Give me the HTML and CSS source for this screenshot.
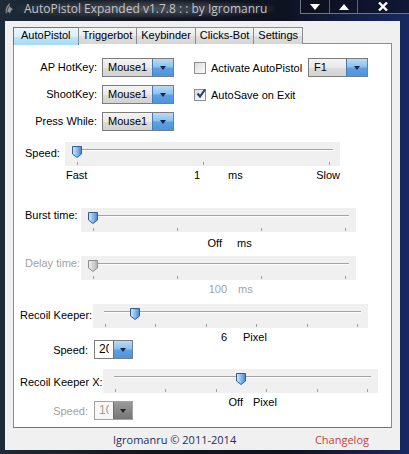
FILE: index.html
```html
<!DOCTYPE html>
<html lang="en">
<head>
  <meta charset="UTF-8">
  <title>AutoPistol Expanded v1.7.8</title>
  <link rel="stylesheet" href="styles.css">
</head>
<body>

  <!-- shared gradients for the slider thumbs -->
  <svg class="defs" width="0" height="0">
    <defs>
      <linearGradient id="thumbBlue" x1="0" y1="0" x2="1" y2="0">
        <stop offset="0" stop-color="#d6e9fb"/>
        <stop offset="0.5" stop-color="#8fbbea"/>
        <stop offset="1" stop-color="#4a84c9"/>
      </linearGradient>
      <linearGradient id="thumbGrey" x1="0" y1="0" x2="1" y2="0">
        <stop offset="0" stop-color="#f2f2f2"/>
        <stop offset="1" stop-color="#b4b4b4"/>
      </linearGradient>
    </defs>
  </svg>

  <div class="window">
    <div class="titlebar">
      <svg class="app-icon" width="11" height="13" viewBox="0 0 11 13">
        <path d="M2 12 C1 8 2 4 6 1 C5 4 6 6 9 7 C7 8 6 10 6 12 C5 10 4 9 2 12 Z" fill="#8d9096"/>
        <path d="M3 11 C3 8 4 5 6 3" stroke="#3a3d44" stroke-width="1" fill="none"/>
      </svg>
      <span class="title">AutoPistol Expanded v1.7.8 : : by Igromanru</span>
      <div class="caption-buttons">
        <span class="cap cap-min">
          <svg width="10" height="6" viewBox="0 0 10 6"><path d="M0 0 H10 L5 6 Z" fill="#fff"/></svg>
        </span>
        <span class="cap cap-max">
          <svg width="10" height="6" viewBox="0 0 10 6"><path d="M0 6 H10 L5 0 Z" fill="#fff"/></svg>
        </span>
        <span class="cap cap-close">
          <svg width="10" height="9" viewBox="0 0 10 9"><path d="M1 0.5 L9 8.5 M9 0.5 L1 8.5" stroke="#fff" stroke-width="2.4"/></svg>
        </span>
      </div>
    </div>

    <div class="client">
      <div class="tabs">
        <div class="tab active">AutoPistol</div>
        <div class="tab">Triggerbot</div>
        <div class="tab">Keybinder</div>
        <div class="tab">Clicks-Bot</div>
        <div class="tab">Settings</div>
      </div>

      <div class="panel">
        <div class="hotkeys">
          <span class="key-label">AP HotKey:</span>
          <div class="combo"><span class="combo-text">Mouse1</span><span class="combo-btn"><i class="arrow"></i></span></div>
          <div class="option">
            <span class="check"></span>
            <span>Activate AutoPistol</span>
            <div class="combo combo-f1"><span class="combo-text">F1</span><span class="combo-btn"><i class="arrow"></i></span></div>
          </div>

          <span class="key-label">ShootKey:</span>
          <div class="combo"><span class="combo-text">Mouse1</span><span class="combo-btn"><i class="arrow"></i></span></div>
          <div class="option">
            <span class="check checked">
              <svg width="12" height="12" viewBox="0 0 12 12"><path d="M2.5 5.5 L5 8.5 L10 1.5" stroke="#233e6d" stroke-width="2" fill="none"/></svg>
            </span>
            <span>AutoSave on Exit</span>
          </div>

          <span class="key-label">Press While:</span>
          <div class="combo"><span class="combo-text">Mouse1</span><span class="combo-btn"><i class="arrow"></i></span></div>
        </div>

        <!-- Speed -->
        <div class="slider-row row-speed">
          <span class="slider-label">Speed:</span>
          <div class="track">
            <div class="rail">
              <span class="tick" style="left:0%"></span>
              <span class="tick" style="left:50%"></span>
              <span class="tick" style="left:100%"></span>
              <span class="thumb" style="left:0%"><svg width="10" height="12" viewBox="0 0 10 12"><path d="M0.5 0.5 H9.5 V8 L5 11.5 L0.5 8 Z" fill="url(#thumbBlue)" stroke="#2f5e97"/></svg></span>
            </div>
          </div>
        </div>
        <div class="readout readout-speed">
          <span class="fast">Fast</span>
          <span class="num">1</span>
          <span class="unit">ms</span>
          <span class="slow">Slow</span>
        </div>

        <!-- Burst time -->
        <div class="slider-row row-burst">
          <span class="slider-label">Burst time:</span>
          <div class="track">
            <div class="rail">
              <span class="tick" style="left:0%"></span>
              <span class="tick" style="left:33.33%"></span>
              <span class="tick" style="left:66.67%"></span>
              <span class="tick" style="left:100%"></span>
              <span class="thumb" style="left:0%"><svg width="10" height="12" viewBox="0 0 10 12"><path d="M0.5 0.5 H9.5 V8 L5 11.5 L0.5 8 Z" fill="url(#thumbBlue)" stroke="#2f5e97"/></svg></span>
            </div>
          </div>
        </div>
        <div class="readout readout-burst">
          <span class="num">Off</span>
          <span class="unit">ms</span>
        </div>

        <!-- Delay time (disabled) -->
        <div class="slider-row row-delay disabled">
          <span class="slider-label">Delay time:</span>
          <div class="track">
            <div class="rail">
              <span class="tick" style="left:0%"></span>
              <span class="tick" style="left:33.33%"></span>
              <span class="tick" style="left:66.67%"></span>
              <span class="tick" style="left:100%"></span>
              <span class="thumb" style="left:0%"><svg width="10" height="12" viewBox="0 0 10 12"><path d="M0.5 0.5 H9.5 V8 L5 11.5 L0.5 8 Z" fill="url(#thumbGrey)" stroke="#8e8e8e"/></svg></span>
            </div>
          </div>
        </div>
        <div class="readout readout-delay disabled">
          <span class="num">100</span>
          <span class="unit">ms</span>
        </div>

        <!-- Recoil Keeper -->
        <div class="slider-row row-recoil">
          <span class="slider-label">Recoil Keeper:</span>
          <div class="track">
            <div class="rail">
              <span class="tick" style="left:0%"></span>
              <span class="tick" style="left:20%"></span>
              <span class="tick" style="left:40%"></span>
              <span class="tick" style="left:60%"></span>
              <span class="tick" style="left:80%"></span>
              <span class="tick" style="left:100%"></span>
              <span class="thumb" style="left:12%"><svg width="10" height="12" viewBox="0 0 10 12"><path d="M0.5 0.5 H9.5 V8 L5 11.5 L0.5 8 Z" fill="url(#thumbBlue)" stroke="#2f5e97"/></svg></span>
            </div>
          </div>
        </div>
        <div class="readout readout-recoil">
          <span class="num">6</span>
          <span class="unit">Pixel</span>
        </div>
        <div class="combo-row row-recoil-speed">
          <span class="combo-label">Speed:</span>
          <div class="combo combo-small"><span class="combo-text"><span class="clip">20</span></span><span class="combo-btn"><i class="arrow"></i></span></div>
        </div>

        <!-- Recoil Keeper X -->
        <div class="slider-row row-recoil-x">
          <span class="slider-label">Recoil Keeper X:</span>
          <div class="track">
            <div class="rail">
              <span class="tick" style="left:0%"></span>
              <span class="tick" style="left:20%"></span>
              <span class="tick" style="left:40%"></span>
              <span class="tick" style="left:60%"></span>
              <span class="tick" style="left:80%"></span>
              <span class="tick" style="left:100%"></span>
              <span class="thumb" style="left:50%"><svg width="10" height="12" viewBox="0 0 10 12"><path d="M0.5 0.5 H9.5 V8 L5 11.5 L0.5 8 Z" fill="url(#thumbBlue)" stroke="#2f5e97"/></svg></span>
            </div>
          </div>
        </div>
        <div class="readout readout-recoil-x">
          <span class="num">Off</span>
          <span class="unit">Pixel</span>
        </div>
        <div class="combo-row row-x-speed disabled">
          <span class="combo-label">Speed:</span>
          <div class="combo combo-small"><span class="combo-text"><span class="clip">10</span></span><span class="combo-btn"><i class="arrow"></i></span></div>
        </div>
      </div>

      <div class="footer">
        <span class="copyright">Igromanru © 2011-2014</span>
        <span class="changelog">Changelog</span>
      </div>
    </div>
  </div>

</body>
</html>
```

FILE: styles.css
```css
body {
  margin: 0;
  background: #0c1018;
  font-family: "Liberation Sans", Arial, sans-serif;
  font-size: 11px;
  color: #000;
}

.defs {
  position: absolute;
}

.window {
  width: 409px;
  height: 454px;
  display: flex;
  flex-direction: column;
  background: linear-gradient(90deg, #1e2a38 0%, #11161f 35%, #0e1322 70%, #182862 100%);
}

/* ---------- title bar ---------- */

.titlebar {
  height: 21px;
  display: flex;
  align-items: flex-start;
  flex-shrink: 0;
}

.app-icon {
  margin: 2px 0 0 4px;
}

.title {
  margin-left: 1px;
  padding: 0 8px;
  font-family: "Open Sans", "Liberation Sans", sans-serif;
  font-size: 12px;
  line-height: 18px;
  color: #c4c5c8;
  white-space: nowrap;
  background: radial-gradient(ellipse at center, rgba(120,124,134,0.6) 0%, rgba(70,74,84,0.4) 55%, rgba(20,24,32,0) 78%);
}

.caption-buttons {
  margin-left: auto;
  display: flex;
  height: 13px;
  border: 1px solid #6f7686;
  border-top: none;
  border-right: none;
  background: rgba(10,14,24,0.6);
}

.cap {
  display: flex;
  align-items: center;
  justify-content: center;
  height: 13px;
  border-left: 1px solid #5d6474;
}

.cap:first-child {
  border-left: none;
}

.cap-min { width: 28px; }
.cap-max { width: 27px; }
.cap-close { width: 52px; padding-right: 2px; box-sizing: border-box; }

/* ---------- client area ---------- */

.client {
  flex: 1;
  margin: 0 9px 4px 5px;
  padding: 6px 0 0 8px;
  background: #f0f0f0;
  display: flex;
  flex-direction: column;
}

.tabs {
  display: flex;
  height: 17px;
  position: relative;
  z-index: 1;
}

.tab {
  height: 16px;
  line-height: 15px;
  padding: 0 4px;
  border: 1px solid #898c95;
  border-bottom: none;
  margin-left: -1px;
  background: linear-gradient(#f4f4f4 0%, #ebebeb 50%, #dedede 51%, #d6d6d6 100%);
}

.tab:first-child {
  margin-left: 0;
}

.tab.active {
  height: 17px;
  padding: 0 7px;
  border-color: #3c7fb1;
  background: linear-gradient(#eaf6fd 0%, #d9f0fc 50%, #bee6fd 51%, #a7d9f5 100%);
}

.panel {
  width: 379px;
  height: 385px;
  box-sizing: border-box;
  margin-top: -1px;
  padding-top: 14px;
  border: 1px solid #898c95;
  border-bottom-color: #6e7079;
  background: #fff;
}

/* ---------- hotkey block ---------- */

.hotkeys {
  display: grid;
  grid-template-columns: 84px 72px 1fr;
  grid-auto-rows: 19px;
  column-gap: 4px;
  row-gap: 8px;
}

.key-label {
  text-align: right;
  line-height: 19px;
  padding-right: 1px;
}

.option {
  display: flex;
  align-items: center;
  padding-left: 16px;
}

.check {
  width: 12px;
  height: 12px;
  box-sizing: border-box;
  border: 1px solid #8e8f8f;
  background: linear-gradient(135deg, #dcdcdc, #fbfbfb);
  margin-right: 5px;
  display: flex;
  align-items: center;
  justify-content: center;
}

.check svg {
  margin-top: -2px;
  margin-right: -2px;
}

.combo {
  display: flex;
  height: 19px;
  box-sizing: border-box;
  border: 1px solid #7c7c7c;
}

.combo-text {
  flex: 1;
  padding-left: 5px;
  line-height: 17px;
  background: linear-gradient(#f3f3f3 0%, #e9e9e9 50%, #dcdcdc 51%, #d2d2d2 100%);
  overflow: hidden;
  white-space: nowrap;
}

.combo-btn {
  width: 20px;
  display: flex;
  align-items: center;
  justify-content: center;
  background: linear-gradient(#b9dbf7 0%, #8cc1ee 45%, #5c9fe2 55%, #4f94da 100%);
  border-left: 1px solid #3c7dbf;
}

.arrow {
  width: 0;
  height: 0;
  border-left: 3px solid transparent;
  border-right: 3px solid transparent;
  border-top: 4px solid #13284d;
}

.combo-f1 {
  width: 60px;
  margin-left: 6px;
}

/* ---------- sliders ---------- */

.slider-row {
  display: flex;
  align-items: flex-start;
  padding-left: 11px;
}

.slider-label {
  line-height: 14px;
  margin-top: 4px;
  white-space: nowrap;
}

.track {
  position: relative;
  width: 275px;
  height: 24px;
  background: #f0f0f0;
}

.rail {
  position: absolute;
  left: 12px;
  right: 11px;
  top: 0;
  bottom: 0;
}

.rail::before {
  content: '';
  position: absolute;
  left: -1px;
  right: -4px;
  top: 7px;
  height: 1px;
  background: #a3a3a3;
  border-bottom: 1px solid #fdfdfd;
}

.tick {
  position: absolute;
  top: 20px;
  width: 1px;
  height: 3px;
  background: #a0a0a0;
}

.thumb {
  position: absolute;
  top: 4px;
  width: 10px;
  height: 12px;
  margin-left: -5px;
}

.thumb svg {
  display: block;
}

.row-speed { margin-top: 11px; }
.row-speed .slider-label { width: 40px; margin-top: 4px; }

.row-burst { margin-top: 26px; }
.row-burst .slider-label { width: 56px; margin-top: 0; }

.row-delay { margin-top: 6px; }
.row-delay .slider-label { width: 56px; margin-top: 0; }

.row-recoil { margin-top: 8px; padding-left: 6px; }
.row-recoil .slider-label { width: 73px; margin-top: 4px; }

.row-recoil-x { margin-top: 10px; padding-left: 6px; }
.row-recoil-x .slider-label { width: 83px; margin-top: 6px; }

.disabled,
.disabled .slider-label,
.disabled .combo-label {
  color: #a2a2a2;
}

/* ---------- value read-outs ---------- */

.readout {
  display: flex;
  height: 14px;
  line-height: 14px;
  white-space: nowrap;
}

.num {
  width: 40px;
  text-align: right;
}

.readout-speed {
  width: 274px;
  margin-top: 2px;
  margin-left: 52px;
}

.readout-speed .fast { width: 94px; }
.readout-speed .num { width: 40px; }
.readout-speed .unit { margin-left: 28px; }
.readout-speed .slow { margin-left: auto; }

.readout-burst { margin-top: 4px; padding-left: 168px; }
.readout-burst .unit { margin-left: 15px; }

.readout-delay { margin-top: 2px; padding-left: 173px; }
.readout-delay .unit { margin-left: 11px; }

.readout-recoil { margin-top: 2px; padding-left: 173px; }
.readout-recoil .unit { margin-left: 16px; }

.readout-recoil-x { margin-top: 2px; padding-left: 189px; }
.readout-recoil-x .unit { margin-left: 10px; }

/* ---------- small combos ---------- */

.combo-row {
  display: flex;
  align-items: center;
}

.combo-label {
  width: 74px;
  text-align: right;
  margin-right: 6px;
}

.combo-small {
  width: 39px;
}

.combo-small .combo-text {
  flex: none;
  width: 18px;
  box-sizing: border-box;
  padding-left: 4px;
  background: #fff;
  font-size: 12px;
}

.clip {
  display: inline-block;
  width: 10px;
  overflow: hidden;
  vertical-align: top;
}

.row-recoil-speed { margin-top: -4px; }
.row-x-speed { margin-top: -8px; }

.row-x-speed .combo {
  border-color: #a3a3a3;
}

.row-x-speed .combo-text {
  background: #f7f7f7;
  color: #9c9c9c;
}

.row-x-speed .combo-btn {
  background: linear-gradient(#9a9a9a, #767676);
  border-left-color: #6a6a6a;
}

.row-x-speed .arrow {
  border-top-color: #262626;
}

/* ---------- footer ---------- */

.footer {
  flex: 1;
  display: flex;
  align-items: center;
  padding: 0 31px 0 100px;
  font-family: "Open Sans", "Liberation Sans", sans-serif;
  font-size: 11px;
}

.copyright {
  color: #1d2c5a;
}

.changelog {
  margin-left: auto;
  color: #c4423f;
}
```
